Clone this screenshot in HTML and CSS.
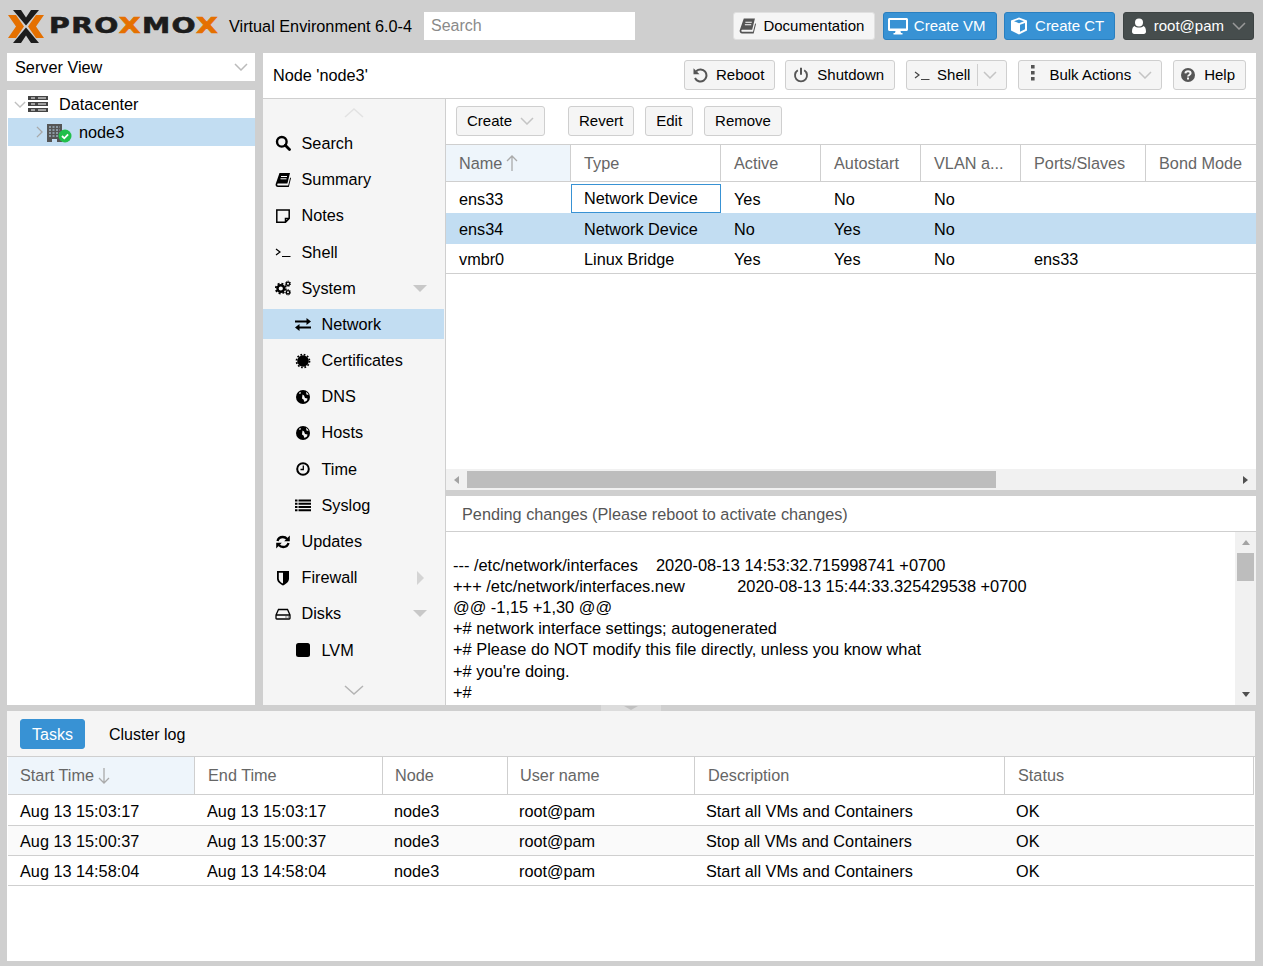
FILE: index.html
```html
<!DOCTYPE html>
<html lang="en">
<head>
    <meta charset="UTF-8">
    <meta name="viewport" content="width=device-width, initial-scale=1.0">
    <title>node3 - Proxmox Virtual Environment</title>
    <link rel="stylesheet" href="styles.css">
</head>
<body>
    <svg class="sprite" xmlns="http://www.w3.org/2000/svg">
        <symbol id="i-chev-down" viewBox="0 0 14 8"><polyline points="1,1 7,7 13,1" fill="none" stroke="currentColor" stroke-width="1.5"/></symbol>
        <symbol id="i-chev-right" viewBox="0 0 8 14"><polyline points="1,1 7,7 1,13" fill="none" stroke="currentColor" stroke-width="1.5"/></symbol>
        <symbol id="i-book" viewBox="0 0 16 16"><path fill="currentColor" d="M4.500 1H15l-2.600 10.500H3.400c-.9 0-1.200.5-1.200 1s.4 1 1.200 1h9.800l2-8 .8.600-2.200 8.900H3C1.300 15 .4 13.800.6 12.300Z"/><path stroke="#fff" stroke-width="1" d="M6 4.500h6M5.500 6.800h6"/></symbol>
        <symbol id="i-search" viewBox="0 0 16 16"><circle cx="6.800" cy="6.800" r="4.800" fill="none" stroke="currentColor" stroke-width="2.400"/><path d="M10.300 10.300 14.500 14.500" stroke="currentColor" stroke-width="2.800" stroke-linecap="round"/></symbol>
        <symbol id="i-note" viewBox="0 0 16 16"><path fill="none" stroke="currentColor" stroke-width="1.500" d="M1.800 2h12.400v8.500l-3.700 3.700H1.800ZM14 10.500h-3.500V14"/></symbol>
        <symbol id="i-term" viewBox="0 0 16 16"><path fill="none" stroke="currentColor" stroke-width="1.200" d="M1 5l4 3-4 3M7 12.500h8.500"/></symbol>
        <symbol id="i-cogs" viewBox="0 0 16 16"><circle cx="5.800" cy="8.500" r="3.300" fill="none" stroke="currentColor" stroke-width="2.400"/><circle cx="5.800" cy="8.500" r="5" fill="none" stroke="currentColor" stroke-width="1.800" stroke-dasharray="2 1.930"/><circle cx="13" cy="3.800" r="1.700" fill="none" stroke="currentColor" stroke-width="1.400"/><circle cx="13" cy="3.800" r="2.700" fill="none" stroke="currentColor" stroke-width="1" stroke-dasharray="1.200 1.200"/><circle cx="13" cy="12.300" r="1.700" fill="none" stroke="currentColor" stroke-width="1.400"/><circle cx="13" cy="12.300" r="2.700" fill="none" stroke="currentColor" stroke-width="1" stroke-dasharray="1.200 1.200"/></symbol>
        <symbol id="i-exchange" viewBox="0 0 16 16"><path fill="currentColor" d="M0 4.500h11.500V2L16 5.500 11.500 9V6.500H0ZM16 10.500H4.500V8L0 11.500 4.500 15v-2.500H16Z"/></symbol>
        <symbol id="i-cert" viewBox="0 0 16 16"><circle cx="8" cy="8" r="5.800" fill="currentColor"/><circle cx="8" cy="8" r="6.500" fill="none" stroke="currentColor" stroke-width="1.700" stroke-dasharray="1.700 1.700"/></symbol>
        <symbol id="i-globe" viewBox="0 0 16 16"><circle cx="8" cy="8" r="7" fill="currentColor"/><path fill="#f5f5f5" d="M7.500 5.500 9 6.500l1 2.500 2.500.5-.5 2-2.500 1.500-1-2.500L7 9.500ZM4 3.800l1.500-.8.5 1.200-1.500.8ZM11 2.800l2 1.700.5 1.500-2-.5Z"/></symbol>
        <symbol id="i-clock" viewBox="0 0 16 16"><circle cx="8" cy="8" r="5.800" fill="none" stroke="currentColor" stroke-width="2"/><path d="M8.300 4.500V8.500H5.500" fill="none" stroke="currentColor" stroke-width="1.300"/></symbol>
        <symbol id="i-list" viewBox="0 0 16 16"><path fill="currentColor" d="M0 2.500h2.500v2H0ZM3.500 2.500H16v2H3.500ZM0 5.800h2.500v2H0ZM3.500 5.800H16v2H3.500ZM0 9h2.500v2H0ZM3.500 9H16v2H3.500ZM0 12.200h2.500v2H0ZM3.500 12.200H16v2H3.500Z"/></symbol>
        <symbol id="i-refresh" viewBox="0 0 16 16"><path fill="none" stroke="currentColor" stroke-width="2.300" d="M2.500 7C3.200 4.300 5.300 3 7.800 3c1.800 0 3.300.8 4.300 2M13.500 9c-.7 2.700-2.800 4-5.300 4-1.800 0-3.300-.8-4.300-2"/><path fill="currentColor" d="M14.800 1.500v5.700H9.200ZM1.200 14.500V8.800h5.600Z"/></symbol>
        <symbol id="i-shield" viewBox="0 0 16 16"><path fill="currentColor" d="M2 1h12v7.500c0 3.500-3.200 5.700-6 6.900-2.800-1.200-6-3.400-6-6.900Z"/><path fill="#f5f5f5" d="M8 2.800H3.800v5.700c0 2.500 2.100 4.100 4.200 5Z"/></symbol>
        <symbol id="i-hdd" viewBox="0 0 16 16"><path fill="none" stroke="currentColor" stroke-width="1.300" d="M1 9 3.500 3.500h9L15 9v3.200c0 .5-.3.800-.8.800H1.800c-.5 0-.8-.3-.8-.8ZM1 9h14"/><path stroke="currentColor" stroke-width="1" d="M10.500 11h1M12.800 11h1"/></symbol>
        <symbol id="i-square" viewBox="0 0 16 16"><rect x="1" y="1" width="14" height="14" rx="2.500" fill="currentColor"/></symbol>
        <symbol id="i-desktop" viewBox="0 0 20 18"><path fill="currentColor" d="M1.500 1h17c.8 0 1.500.7 1.500 1.500v10c0 .8-.7 1.500-1.500 1.500h-6l.5 2h1.500v1.500h-9V16H7l.5-2h-6C.7 14 0 13.300 0 12.500v-10C0 1.700.7 1 1.500 1Zm.5 2v8.500h16V3Z"/></symbol>
        <symbol id="i-cube" viewBox="0 0 18 18"><path fill="currentColor" d="M9 .5 17 3.500v10L9 17.500l-8-4v-10Zm0 2L4 4.200l5 2 5-2Zm1 5.300v7l5-2.500V5.900Z"/></symbol>
        <symbol id="i-user" viewBox="0 0 14 16"><circle cx="7" cy="4.500" r="4" fill="currentColor"/><path fill="currentColor" d="M2.500 8c1 1 2.800 1.600 4.500 1.600S10.500 9 11.500 8c1.500.5 2.500 2.500 2.500 5.500 0 1.500-.8 2.500-2.300 2.500H2.300C.8 16 0 15 0 13.500 0 10.500 1 8.500 2.500 8Z"/></symbol>
        <symbol id="i-undo" viewBox="0 0 16 16"><path fill="none" stroke="currentColor" stroke-width="2" d="M4.200 4.200A6 6 0 1 1 3 11"/><path fill="currentColor" d="M1.500 1.200v6h6Z"/></symbol>
        <symbol id="i-power" viewBox="0 0 16 16"><path fill="none" stroke="currentColor" stroke-width="1.900" d="M4.800 3.300a6 6 0 1 0 6.400 0"/><path stroke="currentColor" stroke-width="2" d="M8 .8v7"/></symbol>
        <symbol id="i-dots" viewBox="0 0 6 16"><path fill="currentColor" d="M1 0h3.600v3.400H1ZM1 6h3.600v3.400H1ZM1 12h3.600v3.400H1Z"/></symbol>
        <symbol id="i-help" viewBox="0 0 16 16"><circle cx="8" cy="8" r="7" fill="currentColor"/><path fill="none" stroke="#f5f5f5" stroke-width="2" d="M5.400 6.300C5.600 4.900 6.700 4.300 8 4.300c1.500 0 2.600.8 2.600 2 0 1.700-2.600 1.700-2.600 3.300"/><rect x="7" y="10.500" width="2" height="2" fill="#f5f5f5"/></symbol>
    </svg>

    <header class="topbar">
        <div class="logo">
            <svg class="logo-mark" viewBox="0 0 36 33">
                <path fill="#e57000" d="M0 5h8l8 11.500L8 28H0l8-11.500ZM36 5h-8l-8 11.500L28 28h8l-8-11.500Z"/>
                <path fill="#1c1c1c" d="M5 0h8l5 7.500L23 0h8L18 15.500ZM5 33h8l5-7.500 5 7.500h8L18 17.500Z"/>
            </svg>
            <div class="logo-text">PRO<span class="logo-x">X</span>MO<span class="logo-x">X</span></div>
        </div>
        <div class="version">Virtual Environment 6.0-4</div>
        <input class="top-search" type="text" placeholder="Search">
        <div class="top-actions">
            <button class="btn btn-doc"><svg class="ico ico-doc"><use href="#i-book"/></svg>Documentation</button>
            <button class="btn btn-blue"><svg class="ico ico-vm"><use href="#i-desktop"/></svg>Create VM</button>
            <button class="btn btn-blue btn-ct"><svg class="ico ico-ct"><use href="#i-cube"/></svg>Create CT</button>
            <button class="btn btn-user"><svg class="ico ico-user"><use href="#i-user"/></svg>root@pam<svg class="chev chev-user"><use href="#i-chev-down"/></svg></button>
        </div>
    </header>

    <div class="middle">
        <aside class="left">
            <div class="view-select">Server View<svg class="chev chev-select"><use href="#i-chev-down"/></svg></div>
            <div class="tree">
                <div class="tree-row">
                    <svg class="chev tree-exp"><use href="#i-chev-down"/></svg>
                    <svg class="dc-icon" viewBox="0 0 20 16">
                        <path fill="#444" d="M0 0h20v4H0ZM0 6h20v4H0ZM0 12h20v4H0Z"/>
                        <path stroke="#fff" d="M3 2h4M3 8h4M3 14h4M10 2h8M10 8h8M10 14h8"/>
                    </svg>
                    Datacenter
                </div>
                <div class="tree-row tree-node selected">
                    <svg class="chev-r tree-exp2"><use href="#i-chev-right"/></svg>
                    <svg class="node-icon" viewBox="0 0 25 20">
                        <path fill="#555" d="M0 1h15v18H0Z"/>
                        <path stroke="#c2ddf2" stroke-dasharray="2 1.500" d="M2 4h11M2 7h11M2 10h11M2 13h11"/>
                        <path fill="#c2ddf2" d="M5 16h5v3H5Z"/>
                        <circle cx="18" cy="13" r="6.500" fill="#21bf4b"/>
                        <path fill="none" stroke="#fff" stroke-width="1.800" d="M15 13l2.300 2.300 3.800-4"/>
                    </svg>
                    node3
                </div>
            </div>
        </aside>

        <main class="main">
            <div class="title-bar">
                <div class="node-title">Node 'node3'</div>
                <div class="title-actions">
                    <button class="btn btn-tool btn-reboot"><svg class="ico ico-tool"><use href="#i-undo"/></svg>Reboot</button>
                    <button class="btn btn-tool"><svg class="ico ico-tool"><use href="#i-power"/></svg>Shutdown</button>
                    <button class="btn btn-tool btn-split"><svg class="ico ico-term"><use href="#i-term"/></svg>Shell<span class="split-sep"></span><svg class="chev chev-tool"><use href="#i-chev-down"/></svg></button>
                    <button class="btn btn-tool btn-bulk"><svg class="ico ico-dots"><use href="#i-dots"/></svg>Bulk Actions<svg class="chev chev-tool"><use href="#i-chev-down"/></svg></button>
                    <button class="btn btn-tool btn-help"><svg class="ico ico-tool"><use href="#i-help"/></svg>Help</button>
                </div>
            </div>

            <div class="main-body">
                <nav class="sidenav">
                    <div class="nav-arrow"><svg class="nav-chev nav-chev-up" viewBox="0 0 20 10"><polyline points="1,9 10,1 19,9" fill="none" stroke="currentColor" stroke-width="1.500"/></svg></div>
                    <div class="nav-item"><svg class="ico nav-ico"><use href="#i-search"/></svg>Search</div>
                    <div class="nav-item"><svg class="ico nav-ico"><use href="#i-book"/></svg>Summary</div>
                    <div class="nav-item"><svg class="ico nav-ico"><use href="#i-note"/></svg>Notes</div>
                    <div class="nav-item"><svg class="ico nav-ico"><use href="#i-term"/></svg>Shell</div>
                    <div class="nav-item"><svg class="ico nav-ico"><use href="#i-cogs"/></svg>System<span class="tri-down"></span></div>
                    <div class="nav-item sub selected"><svg class="ico nav-ico"><use href="#i-exchange"/></svg>Network</div>
                    <div class="nav-item sub"><svg class="ico nav-ico"><use href="#i-cert"/></svg>Certificates</div>
                    <div class="nav-item sub"><svg class="ico nav-ico"><use href="#i-globe"/></svg>DNS</div>
                    <div class="nav-item sub"><svg class="ico nav-ico"><use href="#i-globe"/></svg>Hosts</div>
                    <div class="nav-item sub"><svg class="ico nav-ico"><use href="#i-clock"/></svg>Time</div>
                    <div class="nav-item sub"><svg class="ico nav-ico"><use href="#i-list"/></svg>Syslog</div>
                    <div class="nav-item"><svg class="ico nav-ico"><use href="#i-refresh"/></svg>Updates</div>
                    <div class="nav-item"><svg class="ico nav-ico"><use href="#i-shield"/></svg>Firewall<span class="tri-right"></span></div>
                    <div class="nav-item"><svg class="ico nav-ico"><use href="#i-hdd"/></svg>Disks<span class="tri-down"></span></div>
                    <div class="nav-item sub"><svg class="ico nav-ico"><use href="#i-square"/></svg>LVM</div>
                    <div class="nav-arrow nav-arrow-down"><svg class="nav-chev" viewBox="0 0 20 10"><polyline points="1,1 10,9 19,1" fill="none" stroke="currentColor" stroke-width="1.500"/></svg></div>
                </nav>

                <section class="content">
                    <div class="net-panel">
                        <div class="grid-toolbar">
                            <button class="btn btn-tool btn-create">Create<svg class="chev chev-tool"><use href="#i-chev-down"/></svg></button>
                            <button class="btn btn-tool">Revert</button>
                            <button class="btn btn-tool">Edit</button>
                            <button class="btn btn-tool">Remove</button>
                        </div>
                        <div class="net-grid">
                            <div class="net-row net-head">
                                <div class="head-cell sorted">Name<svg class="sort-arrow" viewBox="0 0 12 16"><path fill="none" stroke="currentColor" stroke-width="1.300" d="M6 16V1M1 6l5-5 5 5"/></svg></div>
                                <div class="head-cell">Type</div>
                                <div class="head-cell">Active</div>
                                <div class="head-cell">Autostart</div>
                                <div class="head-cell">VLAN a...</div>
                                <div class="head-cell">Ports/Slaves</div>
                                <div class="head-cell">Bond Mode</div>
                            </div>
                            <div class="net-row data-row row-first">
                                <div class="cell">ens33</div>
                                <div class="cell cell-focus">Network Device</div>
                                <div class="cell">Yes</div>
                                <div class="cell">No</div>
                                <div class="cell">No</div>
                                <div class="cell"></div>
                                <div class="cell"></div>
                            </div>
                            <div class="net-row data-row row-second selected">
                                <div class="cell">ens34</div>
                                <div class="cell">Network Device</div>
                                <div class="cell">No</div>
                                <div class="cell">Yes</div>
                                <div class="cell">No</div>
                                <div class="cell"></div>
                                <div class="cell"></div>
                            </div>
                            <div class="net-row data-row row-last">
                                <div class="cell">vmbr0</div>
                                <div class="cell">Linux Bridge</div>
                                <div class="cell">Yes</div>
                                <div class="cell">Yes</div>
                                <div class="cell">No</div>
                                <div class="cell">ens33</div>
                                <div class="cell"></div>
                            </div>
                        </div>
                        <div class="hscroll">
                            <span class="sb-left"></span>
                            <span class="hthumb"></span>
                            <span class="sb-right"></span>
                        </div>
                    </div>

                    <div class="pending-panel">
                        <div class="pending-title">Pending changes (Please reboot to activate changes)</div>
                        <div class="pending-body">
<pre class="diff">

--- /etc/network/interfaces	2020-08-13 14:53:32.715998741 +0700
+++ /etc/network/interfaces.new		2020-08-13 15:44:33.325429538 +0700
@@ -1,15 +1,30 @@
+# network interface settings; autogenerated
+# Please do NOT modify this file directly, unless you know what
+# you're doing.
+#</pre>
                            <div class="vscroll">
                                <span class="sb-up"></span>
                                <span class="vthumb"></span>
                                <span class="sb-down"></span>
                            </div>
                        </div>
                    </div>
                </section>
            </div>
        </main>
    </div>

    <div class="splitter"><span class="splitter-tri"></span></div>

    <section class="tasks">
        <div class="tasks-bar">
            <button class="btn btn-blue btn-tasks">Tasks</button>
            <button class="btn btn-plain">Cluster log</button>
        </div>
        <div class="task-row task-head">
            <div class="task-hcell sorted">Start Time<svg class="sort-arrow" viewBox="0 0 12 16"><path fill="none" stroke="currentColor" stroke-width="1.300" d="M6 0V15M1 10l5 5 5-5"/></svg></div>
            <div class="task-hcell">End Time</div>
            <div class="task-hcell">Node</div>
            <div class="task-hcell">User name</div>
            <div class="task-hcell">Description</div>
            <div class="task-hcell">Status</div>
        </div>
        <div class="task-rows">
            <div class="task-row data">
                <div>Aug 13 15:03:17</div><div>Aug 13 15:03:17</div><div>node3</div><div>root@pam</div><div>Start all VMs and Containers</div><div>OK</div>
            </div>
            <div class="task-row data stripe">
                <div>Aug 13 15:00:37</div><div>Aug 13 15:00:37</div><div>node3</div><div>root@pam</div><div>Stop all VMs and Containers</div><div>OK</div>
            </div>
            <div class="task-row data">
                <div>Aug 13 14:58:04</div><div>Aug 13 14:58:04</div><div>node3</div><div>root@pam</div><div>Start all VMs and Containers</div><div>OK</div>
            </div>
        </div>
    </section>
</body>
</html>
```

FILE: styles.css
```css
* {
    box-sizing: border-box;
}
html, body {
    height: 100%;
}
body {
    margin: 0;
    background-color: #cfcfcf;
    color: #000;
    font-family: "Liberation Sans", Arial, sans-serif;
    font-size: 16.25px;
    overflow: hidden;
    position: relative;
}
.sprite {
    display: none;
}
.selected {
    background-color: #c2ddf2;
}

/* top bar */
.topbar {
    display: flex;
    align-items: center;
    height: 53px;
    padding: 0 9px 1px 8px;
}
.logo {
    display: flex;
    align-items: center;
    width: 221px;
    flex: none;
}
.logo-mark {
    width: 36px;
    height: 33px;
    flex: none;
}
.logo-text {
    margin-left: 5px;
    font-family: "DejaVu Sans", sans-serif;
    font-weight: bold;
    font-size: 21px;
    letter-spacing: 1px;
    color: #1c1c1c;
    -webkit-text-stroke: 0.6px #1c1c1c;
    transform: scaleX(1.35);
    transform-origin: left center;
    white-space: nowrap;
    width: 130px;
}
.logo-x {
    color: #e57000;
    -webkit-text-stroke-color: #e57000;
}
.version {
    width: 195px;
    flex: none;
    white-space: nowrap;
}
.top-search {
    width: 211px;
    height: 28px;
    border: none;
    padding: 0 7px;
    font: inherit;
    font-size: 16px;
    background-color: #fff;
}
.top-search::placeholder {
    color: #8a8a8a;
}
.top-actions {
    display: flex;
    align-items: center;
    margin-left: auto;
    gap: 7.500px;
}

/* buttons */
.btn {
    display: inline-flex;
    align-items: center;
    height: 28px;
    padding: 0 10px;
    font-family: inherit;
    font-size: 15px;
    color: #000;
    border: 1px solid #cfcfcf;
    border-radius: 3px;
    background-color: #f5f5f5;
    white-space: nowrap;
}
.btn-doc {
    padding: 0 10px 1px 5px;
    border-color: #e0e0e0;
}
.btn-blue {
    background-color: #3892d4;
    border-color: #2a7fbf;
    color: #fff;
    padding: 0 10px 1px 4px;
}
.btn-ct {
    padding-left: 5px;
}
.btn-user {
    background-color: #464d4d;
    border-color: #3d4343;
    color: #fff;
    padding: 0 7px 1px 8px;
}
.btn-tool {
    height: 30px;
    padding: 0 10px 1px 10px;
}
.btn-reboot {
    margin-right: -1px;
}
.btn-split {
    padding: 0 9px 1px 7px;
}
.btn-bulk {
    padding: 0 9px 1px 11px;
}
.btn-help {
    padding-left: 9px;
}
.btn-create {
    margin-right: 12px;
}
.btn-plain {
    background: none;
    border: none;
    height: 30px;
    padding: 2px 0 0;
    font-size: 16px;
}
.btn-tasks {
    height: 30px;
    padding: 2px 11px 0;
    border-color: #3892d4;
    font-size: 16px;
}
.ico {
    flex: none;
    width: 16px;
    height: 16px;
}
.ico-doc {
    width: 17px;
    height: 18px;
    color: #555;
    margin-right: 7px;
}
.ico-vm {
    width: 20px;
    height: 18px;
    margin-right: 6px;
}
.ico-ct {
    width: 18px;
    height: 18px;
    margin-right: 7px;
}
.ico-user {
    width: 14px;
    height: 16px;
    margin-right: 8px;
}
.ico-tool {
    color: #555;
    margin: 0 8px 0 -3px;
}
.ico-term {
    color: #444;
    margin-right: 7px;
}
.ico-dots {
    width: 6px;
    height: 16px;
    color: #555;
    margin: -4px 13px 0 0;
}
.chev {
    flex: none;
    width: 14px;
    height: 8px;
    color: #bbb;
}
.chev-user {
    color: #999;
    margin-left: 8px;
}
.chev-tool {
    margin-left: 8px;
    color: #c4c4c4;
}
.btn-bulk .chev-tool {
    margin-left: 7px;
}
.chev-select {
    margin-left: auto;
}
.split-sep {
    width: 1px;
    height: 22px;
    margin-left: 7px;
    background-color: #cfcfcf;
}
.btn-split .chev-tool {
    margin-left: 5px;
}

/* page columns */
.middle {
    display: flex;
    height: 652px;
    padding: 0 7px;
    gap: 8px;
}
.left {
    display: flex;
    flex-direction: column;
    width: 248px;
    flex: none;
    gap: 9px;
}
.view-select {
    display: flex;
    align-items: center;
    height: 28px;
    padding: 0 7px 0 8px;
    background-color: #fff;
}
.tree {
    flex: 1;
    background-color: #fff;
}
.tree-row {
    display: flex;
    align-items: center;
    height: 28px;
    padding-left: 7px;
}
.tree-node {
    margin-left: 1px;
    padding-left: 28px;
}
.tree-exp {
    width: 12px;
    height: 7px;
    color: #c0c0c0;
}
.tree-exp2 {
    width: 7px;
    height: 12px;
    color: #a8a8a8;
}
.dc-icon {
    width: 20px;
    height: 16px;
    margin: 0 11px 0 2px;
}
.node-icon {
    width: 25px;
    height: 20px;
    margin: 2px 7px 0 4px;
}
.main {
    display: flex;
    flex-direction: column;
    flex: 1;
    min-width: 0;
    background-color: #fff;
}
.title-bar {
    display: flex;
    align-items: center;
    justify-content: space-between;
    height: 46px;
    flex: none;
    padding: 0 10px 1px;
    border-bottom: 1px solid #cfcfcf;
}
.title-actions {
    display: flex;
    gap: 11px;
}
.main-body {
    display: flex;
    flex: 1;
    min-height: 0;
}

/* side menu */
.sidenav {
    display: flex;
    flex-direction: column;
    gap: 6.200px;
    width: 183px;
    flex: none;
    background-color: #f5f5f5;
    border-right: 1px solid #cfcfcf;
}
.nav-arrow {
    display: flex;
    justify-content: center;
    align-items: flex-end;
    height: 22.800px;
    flex: none;
    color: #b4b4b4;
}
.nav-arrow-down {
    height: 38px;
    align-items: center;
}
.nav-chev {
    width: 20px;
    height: 10px;
}
.nav-chev-up {
    color: #e2e2e2;
    margin-bottom: 4px;
}
.nav-item {
    display: flex;
    align-items: center;
    height: 30px;
    flex: none;
    margin-right: 1px;
    padding: 1px 0 0 12px;
}
.nav-item.sub {
    padding-left: 32px;
}
.nav-ico {
    margin-right: 10.500px;
}
.tri-down {
    margin-left: auto;
    margin-right: 17px;
    border-left: 7px solid transparent;
    border-right: 7px solid transparent;
    border-top: 7px solid #c8c8c8;
}
.tri-right {
    margin-left: auto;
    margin-right: 20px;
    border-top: 7px solid transparent;
    border-bottom: 7px solid transparent;
    border-left: 7px solid #d4d4d4;
}

/* network panel */
.content {
    display: flex;
    flex-direction: column;
    flex: 1;
    min-width: 0;
    gap: 6px;
    background-color: #cfcfcf;
}
.net-panel {
    display: flex;
    flex-direction: column;
    height: 391px;
    flex: none;
    background-color: #fff;
}
.grid-toolbar {
    display: flex;
    align-items: center;
    gap: 11px;
    height: 46px;
    flex: none;
    padding: 0 10px 1px;
    border-bottom: 1px solid #cfcfcf;
}
.net-grid {
    flex: 1;
    overflow: hidden;
}
.net-row {
    display: grid;
    grid-template-columns: 125px 150px 100px 100px 100px 125px 125px;
    width: 825px;
}
.net-head {
    height: 37px;
    border-bottom: 1px solid #cfcfcf;
}
.head-cell {
    display: flex;
    align-items: center;
    padding-left: 13px;
    color: #666;
    border-right: 1px solid #cfcfcf;
    white-space: nowrap;
}
.head-cell.sorted, .task-hcell.sorted {
    background-color: #eef5fb;
}
.sort-arrow {
    width: 12px;
    height: 16px;
    margin-left: 4px;
    color: #aaa;
}
.data-row {
    align-items: stretch;
}
.row-first, .row-second {
    height: 31px;
}
.row-last {
    height: 30px;
    border-bottom: 1px solid #cfcfcf;
}
.cell {
    display: flex;
    align-items: center;
    padding: 2px 0 0 13px;
    white-space: nowrap;
}
.row-first .cell {
    padding-top: 3px;
}
.cell-focus {
    border: 1px solid #3892d4;
    margin-top: 2px;
    padding: 0 0 0 12px !important;
    width: 150px;
}
.hscroll {
    display: flex;
    align-items: center;
    height: 21px;
    flex: none;
    background-color: #f1f1f1;
}
.sb-left {
    margin-left: 8px;
    border-top: 4.500px solid transparent;
    border-bottom: 4.500px solid transparent;
    border-right: 5px solid #a3a3a3;
}
.hthumb {
    width: 529px;
    height: 17px;
    margin-left: 8px;
    background-color: #bdbdbd;
}
.sb-right {
    margin-left: auto;
    margin-right: 8px;
    border-top: 4.500px solid transparent;
    border-bottom: 4.500px solid transparent;
    border-left: 5px solid #505050;
}

/* pending changes */
.pending-panel {
    display: flex;
    flex-direction: column;
    flex: 1;
    min-height: 0;
    background-color: #fff;
}
.pending-title {
    display: flex;
    align-items: center;
    height: 36px;
    flex: none;
    padding: 2px 0 0 16px;
    color: #555;
    border-bottom: 1px solid #cfcfcf;
}
.pending-body {
    display: flex;
    flex: 1;
    min-height: 0;
}
.diff {
    flex: 1;
    margin: 0;
    padding: 1.400px 0 0 7px;
    font-family: inherit;
    font-size: 16.400px;
    line-height: 21.200px;
    tab-size: 40.600px;
    overflow: hidden;
}
.vscroll {
    display: flex;
    flex-direction: column;
    align-items: center;
    width: 21px;
    flex: none;
    background-color: #f1f1f1;
}
.sb-up {
    margin-top: 8px;
    border-left: 4.500px solid transparent;
    border-right: 4.500px solid transparent;
    border-bottom: 5px solid #a3a3a3;
}
.vthumb {
    width: 17px;
    height: 28px;
    margin-top: 8px;
    background-color: #bdbdbd;
}
.sb-down {
    margin-top: auto;
    margin-bottom: 8px;
    border-left: 4.500px solid transparent;
    border-right: 4.500px solid transparent;
    border-top: 5px solid #505050;
}

/* collapse handle between the panels */
.splitter {
    position: absolute;
    left: 601px;
    top: 705px;
    display: flex;
    justify-content: center;
    width: 60px;
    height: 6px;
    background-color: #dcdcdc;
}
.splitter-tri {
    height: 0;
    margin-top: 1px;
    border-left: 7px solid transparent;
    border-right: 7px solid transparent;
    border-top: 4px solid #c0c0c0;
}

/* task log */
.tasks {
    height: 250px;
    margin: 6px 8px 0 7px;
    padding: 0 1px;
    background-color: #fff;
}
.tasks-bar {
    display: flex;
    align-items: center;
    gap: 24px;
    height: 46px;
    margin: 0 -1px;
    padding-left: 13px;
    background-color: #f5f5f5;
    border-bottom: 1px solid #cfcfcf;
}
.task-row {
    display: grid;
    grid-template-columns: 187px 188px 125px 187px 310px 1fr;
}
.task-head {
    height: 38px;
    border-bottom: 1px solid #cfcfcf;
}
.task-hcell {
    display: flex;
    align-items: center;
    padding-left: 13px;
    color: #666;
    border-right: 1px solid #cfcfcf;
}
.task-hcell:first-child {
    padding-left: 12px;
}
.task-hcell:nth-child(3), .task-hcell:nth-child(4) {
    padding-left: 12px;
}
.task-rows {
    padding-top: 1px;
}
.task-row.data {
    height: 30px;
    align-items: center;
    padding-top: 2px;
    border-bottom: 1px solid #cfcfcf;
}
.task-row.data > div {
    padding-left: 11px;
    white-space: nowrap;
}
.task-row.data > div:nth-child(-n+2) {
    padding-left: 12px;
}
.task-row.stripe {
    background-color: #fafafa;
}
```
